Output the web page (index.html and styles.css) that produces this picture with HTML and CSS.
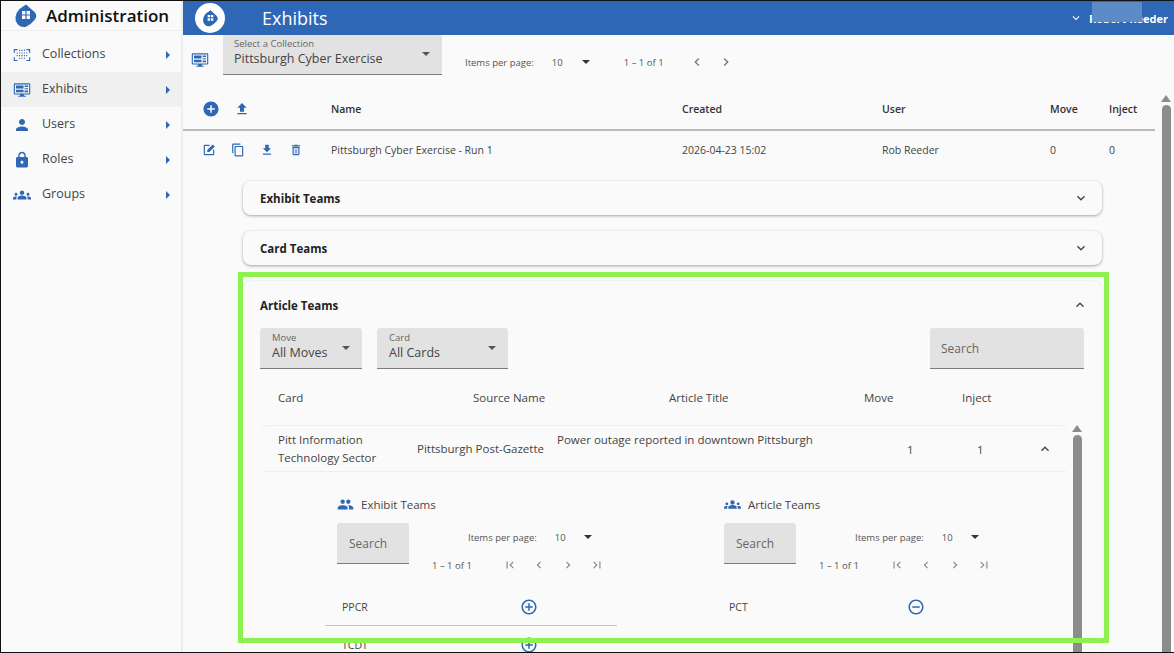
FILE: index.html
```html
<!DOCTYPE html>
<html lang="en">
<head>
    <meta charset="UTF-8">
    <meta name="viewport" content="width=device-width, initial-scale=1.0">
    <title>Exhibits</title>
    <link rel="stylesheet" href="styles.css">
</head>
<body>
    <svg class="defs" width="0" height="0">
        <symbol id="i-add" viewBox="0 0 24 24"><path d="M12 2C6.48 2 2 6.48 2 12s4.48 10 10 10 10-4.48 10-10S17.52 2 12 2zm5 11h-4v4h-2v-4H7v-2h4V7h2v4h4v2z"/></symbol>
        <symbol id="i-upload" viewBox="0 0 24 24"><path d="M9 16h6v-6h4l-7-7-7 7h4zm-4 2h14v2H5z"/></symbol>
        <symbol id="i-download" viewBox="0 0 24 24"><path d="M19 9h-4V3H9v6H5l7 7 7-7zM5 18v2h14v-2H5z"/></symbol>
        <symbol id="i-edit" viewBox="0 0 24 24"><path d="M3 5v14a2 2 0 0 0 2 2h14a2 2 0 0 0 2-2v-8h-2v8H5V5h8V3H5a2 2 0 0 0-2 2z"/><path d="M18.5 2.5L22 6 12.5 15.5H9V12z"/></symbol>
        <symbol id="i-copy" viewBox="0 0 24 24"><path d="M16 1H4c-1.1 0-2 .9-2 2v14h2V3h12V1zm3 4H8c-1.1 0-2 .9-2 2v14c0 1.1.9 2 2 2h11c1.1 0 2-.9 2-2V7c0-1.1-.9-2-2-2zm0 16H8V7h11v14z"/></symbol>
        <symbol id="i-trash" viewBox="0 0 24 24"><path d="M6 19c0 1.1.9 2 2 2h8c1.1 0 2-.9 2-2V7H6v12zM8 9h8v10H8V9zm7.5-5l-1-1h-5l-1 1H5v2h14V4z"/><path d="M10 10.500h1.200v7.500H10zM12.800 10.500H14v7.500h-1.200z"/></symbol>
        <symbol id="i-person" viewBox="0 0 24 24"><path d="M12 12c2.210 0 4-1.790 4-4s-1.790-4-4-4-4 1.790-4 4 1.790 4 4 4zm0 2c-2.670 0-8 1.340-8 4v2h16v-2c0-2.660-5.330-4-8-4z"/></symbol>
        <symbol id="i-lock" viewBox="0 0 24 24"><path d="M18 8h-1V6c0-2.760-2.240-5-5-5S7 3.240 7 6v2H6c-1.100 0-2 .9-2 2v10c0 1.100.9 2 2 2h12c1.100 0 2-.9 2-2V10c0-1.100-.9-2-2-2zm-6 9c-1.100 0-2-.9-2-2s.9-2 2-2 2 .9 2 2-.9 2-2 2zm3.100-9H8.900V6c0-1.710 1.390-3.100 3.100-3.100 1.710 0 3.100 1.390 3.100 3.100v2z"/></symbol>
        <symbol id="i-groups" viewBox="0 0 24 24"><path d="M12 12.750c1.630 0 3.070.39 4.240.9 1.080.48 1.760 1.560 1.760 2.730V18H6v-1.610c0-1.180.68-2.260 1.760-2.730 1.170-.52 2.610-.91 4.240-.91zM4 13c1.100 0 2-.9 2-2s-.9-2-2-2-2 .9-2 2 .9 2 2 2zm1.130 1.100c-.37-.06-.74-.1-1.130-.1-.99 0-1.930.21-2.780.58C.48 14.900 0 15.620 0 16.430V18h4.500v-1.610c0-.83.23-1.610.63-2.290zM20 13c1.100 0 2-.9 2-2s-.9-2-2-2-2 .9-2 2 .9 2 2 2zm4 3.430c0-.81-.48-1.530-1.220-1.850-.85-.37-1.790-.58-2.780-.58-.39 0-.76.04-1.130.1.4.68.63 1.460.63 2.290V18H24v-1.570zM12 6c1.660 0 3 1.340 3 3s-1.340 3-3 3-3-1.340-3-3 1.340-3 3-3z"/></symbol>
        <symbol id="i-people" viewBox="0 0 24 24"><path d="M16 11c1.660 0 2.990-1.340 2.990-3S17.660 5 16 5c-1.660 0-3 1.340-3 3s1.340 3 3 3zm-8 0c1.660 0 2.990-1.340 2.990-3S9.660 5 8 5C6.340 5 5 6.340 5 8s1.340 3 3 3zm0 2c-2.330 0-7 1.170-7 3.500V19h14v-2.500c0-2.330-4.670-3.500-7-3.500zm8 0c-.29 0-.62.02-.97.05 1.160.84 1.970 1.970 1.970 3.450V19h6v-2.500c0-2.330-4.670-3.500-7-3.500z"/></symbol>
        <symbol id="i-first" viewBox="0 0 24 24"><path d="M18.410 16.590L13.820 12l4.590-4.590L17 6l-6 6 6 6zM6 6h2v12H6z"/></symbol>
        <symbol id="i-prev" viewBox="0 0 24 24"><path d="M15.410 7.410L14 6l-6 6 6 6 1.410-1.410L10.830 12z"/></symbol>
        <symbol id="i-next" viewBox="0 0 24 24"><path d="M10 6L8.590 7.410 13.170 12l-4.580 4.590L10 18l6-6z"/></symbol>
        <symbol id="i-last" viewBox="0 0 24 24"><path d="M5.590 7.410L10.180 12l-4.590 4.590L7 18l6-6-6-6zM16 6h2v12h-2z"/></symbol>
        <symbol id="i-down" viewBox="0 0 24 24"><path d="M16.590 8.590L12 13.170 7.410 8.590 6 10l6 6 6-6z"/></symbol>
        <symbol id="i-up" viewBox="0 0 24 24"><path d="M12 8l-6 6 1.410 1.410L12 10.830l4.590 4.580L18 14z"/></symbol>
        <symbol id="i-plus-o" viewBox="0 0 24 24"><path d="M13 7h-2v4H7v2h4v4h2v-4h4v-2h-4V7zm-1-5C6.480 2 2 6.480 2 12s4.480 10 10 10 10-4.480 10-10S17.520 2 12 2zm0 18c-4.410 0-8-3.590-8-8s3.590-8 8-8 8 3.590 8 8-3.590 8-8 8z"/></symbol>
        <symbol id="i-minus-o" viewBox="0 0 24 24"><path d="M7 11v2h10v-2H7zm5-9C6.480 2 2 6.480 2 12s4.480 10 10 10 10-4.480 10-10S17.520 2 12 2zm0 18c-4.410 0-8-3.590-8-8s3.590-8 8-8 8 3.590 8 8-3.590 8-8 8z"/></symbol>
        <symbol id="i-monitor" viewBox="0 0 24 24"><path d="M2.500 3h19A1.500 1.500 0 0 1 23 4.500v12a1.500 1.500 0 0 1-1.500 1.500h-7v1.500H17V21H7v-1.500h2.500V18h-7A1.500 1.500 0 0 1 1 16.500v-12A1.500 1.500 0 0 1 2.500 3zm0 1.500v12h19v-12z"/><path d="M4 6h10v4H4zM15.500 6H20v2h-4.500zM15.500 9.500H20V11h-4.500zM4 11.500h10V15H4zM15.500 12.500H20V15h-4.500z"/></symbol>
        <symbol id="i-grid" viewBox="0 0 24 24"><path d="M1 4h5v1.500H2.500V9H1zM18 4h5v5h-1.500V5.500H18zM1 15h1.500v3.500H6V20H1zM21.500 15H23v5h-5v-1.500h3.500z"/><path d="M8 5h1.500v1.500H8zM11.200 5h1.500v1.500h-1.500zM14.500 5H16v1.500h-1.500zM5 8.500h1.500V10H5zM8 8.500h1.500V10H8zM11.200 8.500h1.500V10h-1.500zM14.500 8.500H16V10h-1.500zM17.500 8.500H19V10h-1.500zM5 12h1.500v1.500H5zM8 12h1.500v1.500H8zM11.200 12h1.500v1.500h-1.500zM14.500 12H16v1.500h-1.500zM17.500 12H19v1.500h-1.500zM8 15.500h1.500V17H8zM11.200 15.500h1.500V17h-1.500zM14.500 15.500H16V17h-1.500z"/></symbol>
        <symbol id="i-logo" viewBox="0 0 24 24"><path d="M12 .5l8.500 7.500q3.500 4 0 8q-4 5-9 7q-5.500.5-8-3q-2.500-3-2-7q1-5 4-8z"/><path fill="#fff" d="M8 7h3.400v3.400H8zM12.600 7H16v3.400h-3.400zM8 11.600h3.400V15H8zM12.600 11.600H16V15h-3.400z"/></symbol>
    </svg>

    <div class="app">
        <aside class="sidebar">
            <div class="brand">
                <svg class="brand-logo"><use href="#i-logo"/></svg>
                <span>Administration</span>
            </div>
            <nav class="nav">
                <a class="nav-item"><svg class="nav-icon"><use href="#i-grid"/></svg><span>Collections</span><i class="caret"></i></a>
                <a class="nav-item active"><svg class="nav-icon"><use href="#i-monitor"/></svg><span>Exhibits</span><i class="caret"></i></a>
                <a class="nav-item"><svg class="nav-icon"><use href="#i-person"/></svg><span>Users</span><i class="caret"></i></a>
                <a class="nav-item"><svg class="nav-icon"><use href="#i-lock"/></svg><span>Roles</span><i class="caret"></i></a>
                <a class="nav-item"><svg class="nav-icon"><use href="#i-groups"/></svg><span>Groups</span><i class="caret"></i></a>
            </nav>
        </aside>

        <div class="main">
            <header class="topbar">
                <div class="top-logo"><svg><use href="#i-logo"/></svg></div>
                <h1>Exhibits</h1>
                <div class="top-user">
                    <svg class="top-chev"><use href="#i-down"/></svg>
                    <b>R</b><b class="top-name">obert Reeder</b>
                    <div class="blur"></div>
                </div>
            </header>

            <div class="scroll-area">
                <div class="content">
                    <div class="toolbar">
                        <svg class="toolbar-icon"><use href="#i-monitor"/></svg>
                        <div class="select collection">
                            <label>Select a Collection</label>
                            <div class="value">Pittsburgh Cyber Exercise</div>
                            <i class="arrow"></i>
                        </div>
                        <div class="pager">
                            <span class="pager-label">Items per page:</span>
                            <span class="pager-size">10</span>
                            <i class="arrow dark"></i>
                            <span class="pager-range">1 – 1 of 1</span>
                            <svg class="pg pg-a"><use href="#i-prev"/></svg>
                            <svg class="pg pg-b"><use href="#i-next"/></svg>
                        </div>
                    </div>

                    <div class="ex-row ex-head">
                        <div class="ex-actions head-actions">
                            <svg class="ic-add"><use href="#i-add"/></svg>
                            <svg class="ic-up"><use href="#i-upload"/></svg>
                        </div>
                        <div>Name</div><div>Created</div><div>User</div><div>Move</div><div>Inject</div>
                    </div>
                    <div class="ex-row ex-body">
                        <div class="ex-actions">
                            <svg><use href="#i-edit"/></svg>
                            <svg><use href="#i-copy"/></svg>
                            <svg><use href="#i-download"/></svg>
                            <svg><use href="#i-trash"/></svg>
                        </div>
                        <div>Pittsburgh Cyber Exercise - Run 1</div><div>2026-04-23 15:02</div><div>Rob Reeder</div><div>0</div><div>0</div>
                    </div>

                    <section class="panel closed">
                        <h2>Exhibit Teams</h2>
                        <svg class="chev"><use href="#i-down"/></svg>
                    </section>
                    <section class="panel closed">
                        <h2>Card Teams</h2>
                        <svg class="chev"><use href="#i-down"/></svg>
                    </section>

                    <section class="panel open">
                        <div class="open-head">
                            <h2>Article Teams</h2>
                            <svg class="chev"><use href="#i-up"/></svg>
                        </div>
                        <div class="filters">
                            <div class="select move">
                                <label>Move</label>
                                <div class="value">All Moves</div>
                                <i class="arrow"></i>
                            </div>
                            <div class="select card">
                                <label>Card</label>
                                <div class="value">All Cards</div>
                                <i class="arrow"></i>
                            </div>
                            <div class="search wide">Search</div>
                        </div>

                        <div class="inner">
                            <div class="inner-main">
                                <div class="art-head">
                                    <div class="c1">Card</div><div class="c2">Source Name</div><div class="c3">Article Title</div><div class="c4">Move</div><div class="c5">Inject</div>
                                </div>
                                <div class="art-row">
                                    <div class="a1">Pitt Information<br>Technology Sector</div>
                                    <div class="a2">Pittsburgh Post-Gazette</div>
                                    <div class="a3">Power outage reported in downtown Pittsburgh</div>
                                    <div class="a4">1</div>
                                    <div class="a5">1</div>
                                    <svg class="a6"><use href="#i-up"/></svg>
                                </div>

                                <div class="team-cols">
                                    <div class="team-col">
                                        <div class="team-title"><svg><use href="#i-people"/></svg><span>Exhibit Teams</span></div>
                                        <div class="team-tools">
                                            <div class="search small">Search</div>
                                            <div class="team-pager">
                                                <div class="tp-top"><span class="tp-label">Items per page:</span><span class="tp-size">10</span><i class="arrow dark"></i></div>
                                                <div class="tp-bottom"><span class="tp-range">1 – 1 of 1</span>
                                                    <svg><use href="#i-first"/></svg><svg><use href="#i-prev"/></svg><svg><use href="#i-next"/></svg><svg><use href="#i-last"/></svg>
                                                </div>
                                            </div>
                                        </div>
                                        <div class="team-row line"><span>PPCR</span><svg><use href="#i-plus-o"/></svg></div>
                                        <div class="team-row"><span>TCDT</span><svg><use href="#i-plus-o"/></svg></div>
                                    </div>
                                    <div class="team-col">
                                        <div class="team-title"><svg><use href="#i-groups"/></svg><span>Article Teams</span></div>
                                        <div class="team-tools">
                                            <div class="search small">Search</div>
                                            <div class="team-pager">
                                                <div class="tp-top"><span class="tp-label">Items per page:</span><span class="tp-size">10</span><i class="arrow dark"></i></div>
                                                <div class="tp-bottom"><span class="tp-range">1 – 1 of 1</span>
                                                    <svg><use href="#i-first"/></svg><svg><use href="#i-prev"/></svg><svg><use href="#i-next"/></svg><svg><use href="#i-last"/></svg>
                                                </div>
                                            </div>
                                        </div>
                                        <div class="team-row"><span>PCT</span><svg><use href="#i-minus-o"/></svg></div>
                                    </div>
                                </div>
                            </div>
                            <div class="scrollbar inner-bar"><i class="sb-up"></i><i class="sb-thumb"></i></div>
                        </div>
                    </section>
                </div>
                <div class="scrollbar page-bar"><i class="sb-up"></i><i class="sb-thumb"></i></div>
            </div>
        </div>
    </div>

    <div class="highlight"></div>
</body>
</html>
```

FILE: styles.css
```css
*{
    margin: 0;
    padding: 0;
    box-sizing: border-box;
}
html,body{
    width: 1174px;
    height: 653px;
    overflow: hidden;
}
body{
    position: relative;
    font-family: "Open Sans", "Liberation Sans", sans-serif;
    color: #333;
    background: #fafafa;
    border: 1px solid #111;
    border-right: 0;
}
.defs{
    position: absolute;
}
svg{
    display: block;
    fill: #2d67b5;
    flex: none;
}
.app{
    display: flex;
    height: 100%;
}

/* left menu */
.sidebar{
    width: 182px;
    flex: none;
    background: #fafafa;
    border-right: 2px solid #eee;
}
.brand{
    height: 29px;
    display: flex;
    align-items: center;
    padding-left: 13px;
    border-bottom: 1px solid #eee;
    font-size: 17px;
    font-weight: 600;
    color: #111;
    box-sizing: content-box;
}
.brand-logo{
    width: 24px;
    height: 24px;
    margin-right: 8px;
}
.nav{
    padding-top: 6px;
}
.nav-item{
    display: flex;
    align-items: center;
    height: 35px;
    padding-left: 12px;
    font-size: 12.500px;
    color: #444;
}
.nav-item.active{
    background: #f0f0f0;
}
.nav-item span{
    flex: 1;
    padding-bottom: 2px;
}
.nav-icon{
    width: 18px;
    height: 18px;
    margin-right: 11px;
}
.caret{
    width: 0;
    height: 0;
    margin-right: 11px;
    border-left: 4px solid #2d67b5;
    border-top: 4px solid transparent;
    border-bottom: 4px solid transparent;
}

/* top bar */
.main{
    flex: 1;
    min-width: 0;
    display: flex;
    flex-direction: column;
}
.topbar{
    height: 34px;
    flex: none;
    display: flex;
    align-items: center;
    padding-left: 12px;
    background: #2d67b5;
    color: #fff;
    position: relative;
}
.top-logo{
    width: 30px;
    height: 30px;
    border-radius: 50%;
    background: #fff;
    display: flex;
    align-items: center;
    justify-content: center;
}
.top-logo svg{
    width: 17px;
    height: 17px;
}
.topbar h1{
    font-size: 18px;
    font-weight: 400;
    margin-left: 37px;
    flex: 1;
}
.top-user{
    display: flex;
    align-items: center;
    width: 105px;
    font-size: 11px;
    position: relative;
}
.top-chev{
    width: 14px;
    height: 14px;
    fill: #fff;
    margin-right: 6px;
}
.top-name{
    white-space: nowrap;
}
.blur{
    position: absolute;
    left: 23px;
    top: -9px;
    width: 50px;
    height: 20px;
    background: #5c8bc8;
}

/* page body */
.scroll-area{
    flex: 1;
    min-height: 0;
    display: flex;
    overflow: hidden;
}
.content{
    flex: 1;
    min-width: 0;
}
.scrollbar{
    flex: none;
    display: flex;
    flex-direction: column;
    align-items: center;
}
.page-bar{
    width: 16px;
    padding-top: 60px;
}
.sb-up{
    width: 0;
    height: 0;
    border-left: 5px solid transparent;
    border-right: 5px solid transparent;
    border-bottom: 7px solid #8c8c8c;
    margin-bottom: 3px;
}
.sb-thumb{
    width: 9px;
    flex: 1;
    background: #8c8c8c;
    border-radius: 5px 5px 0 0;
}

.toolbar{
    display: flex;
    height: 53px;
    padding-left: 8px;
}
.toolbar-icon{
    width: 18px;
    height: 18px;
    margin: 16px 14px 0 0;
}
.select{
    position: relative;
    background: #e2e2e2;
    border-bottom: 1px solid #7b7b7b;
    border-radius: 3px 3px 0 0;
}
.select label{
    display: block;
    font-size: 9.500px;
    color: #666;
    line-height: 12px;
}
.select .value{
    font-size: 12.500px;
    color: #444;
    line-height: 17px;
}
.collection{
    width: 219px;
    height: 40px;
    padding: 3px 0 0 11px;
}
.arrow{
    display: block;
    width: 0;
    height: 0;
    border-left: 4px solid transparent;
    border-right: 4px solid transparent;
    border-top: 4px solid #555;
}
.arrow.dark{
    border-top-color: #333;
}
.select .arrow{
    position: absolute;
    right: 12px;
    top: 17px;
}
.pager{
    display: flex;
    align-items: center;
    height: 54px;
    font-size: 9.500px;
    color: #555;
    padding-left: 23px;
}
.pager-size{
    margin-left: 18px;
    width: 30px;
}
.pager-range{
    margin-left: 34px;
    width: 65px;
}
.pg{
    width: 16px;
    height: 16px;
    fill: #777;
}
.pg-b{
    margin-left: 13px;
}

.ex-row{
    display: grid;
    grid-template-columns: 148px 351px 200px 168px 59px 48px;
    align-items: center;
    font-size: 10.500px;
    color: #444;
    padding-right: 4px;
}
.ex-head{
    height: 43px;
    font-weight: 600;
    color: #333;
    border-bottom: 2px solid #bbb;
    margin-right: 3px;
    padding-right: 0;
}
.ex-body{
    height: 38px;
}
.ex-actions{
    display: flex;
    padding-left: 19px;
    gap: 15px;
}
.ex-actions svg{
    width: 14px;
    height: 14px;
}
.head-actions{
    gap: 14px;
    align-items: center;
}
.ic-add{
    width: 18px !important;
    height: 18px !important;
}
.ic-up{
    width: 16px !important;
    height: 16px !important;
}

/* expansion panels */
.panel{
    width: 859px;
    margin-left: 60px;
    background: #fafafa;
    border-radius: 8px;
    box-shadow: 0 1px 3px rgba(0,0,0,0.35);
}
.panel h2{
    font-size: 11.500px;
    font-weight: 700;
    color: #222;
}
.closed{
    height: 34px;
    display: flex;
    align-items: center;
    justify-content: space-between;
    padding: 0 13px 0 17px;
    margin-bottom: 16px;
}
.closed:first-of-type{
    margin-top: 12px;
}
.chev{
    width: 16px;
    height: 16px;
    fill: #444;
}
.open{
    margin-top: 15px;
    height: 400px;
    padding: 0 18px 0 17px;
    box-shadow: 0 0 2px rgba(0,0,0,0.12);
}
.open-head{
    height: 47px;
    display: flex;
    align-items: center;
    justify-content: space-between;
    padding-right: 0;
    padding-top: 1px;
}
.open-head .chev{
    margin-right: -4px;
}
.filters{
    display: flex;
    gap: 15px;
    height: 41px;
}
.filters .select{
    padding: 4px 0 0 12px;
    border-radius: 3px 3px 0 0;
}
.move{
    width: 102px;
}
.card{
    width: 131px;
}
.filters .select .arrow{
    top: 18px;
}
.search{
    background: #e2e2e2;
    border-bottom: 1px solid #7b7b7b;
    border-radius: 3px 3px 0 0;
    font-size: 12px;
    color: #666;
    display: flex;
    align-items: center;
    padding-left: 12px;
}
.wide{
    width: 154px;
    margin-left: auto;
    padding-left: 11px;
}

/* nested article table */
.inner{
    display: flex;
    height: 300px;
}
.inner-main{
    width: 812px;
    flex: none;
}
.inner-bar{
    width: 10px;
    padding-top: 18px;
    margin-top: 46px;
    margin-left: 0;
}
.inner-bar{
    padding-top: 10px;
}
.art-head{
    display: grid;
    grid-template-columns: 195px 196px 195px 98px 60px;
    height: 56px;
    padding: 0 0 0 18px;
    align-items: center;
    font-size: 11.500px;
    color: #444;
}
.art-row{
    position: relative;
    display: flex;
    height: 47px;
    width: 809px;
    font-size: 11.500px;
    color: #444;
    line-height: 17.500px;
    border-top: 1px solid #eee;
    border-bottom: 1px solid #eee;
    border-radius: 8px;
}
.a1{
    margin-left: 18px;
    width: 139px;
    padding-top: 5px;
}
.a2{
    width: 140px;
    padding-top: 14px;
    white-space: nowrap;
}
.a3{
    width: 350px;
    padding-top: 5px;
    white-space: nowrap;
}
.a4{
    width: 70px;
    padding-top: 15px;
}
.a5{
    width: 60px;
    padding-top: 15px;
}
.a6{
    width: 16px;
    height: 16px;
    fill: #444;
    margin-top: 15px;
}

.team-cols{
    display: flex;
    padding-left: 65px;
}
.team-col{
    width: 387px;
    flex: none;
}
.team-title{
    display: flex;
    align-items: center;
    height: 20px;
    margin-top: 22px;
    margin-left: 12px;
    font-size: 11.500px;
    color: #444;
}
.team-title svg{
    width: 17px;
    height: 17px;
    margin-right: 7px;
}
.team-tools{
    display: flex;
    margin-top: 9px;
    margin-left: 12px;
}
.small{
    width: 72px;
    height: 41px;
}
.team-pager{
    font-size: 9.500px;
    color: #555;
}
.tp-top{
    display: flex;
    align-items: center;
    height: 28px;
    margin-top: 0;
    padding-left: 59px;
}
.tp-size{
    margin-left: 18px;
    width: 29px;
}
.tp-bottom{
    display: flex;
    align-items: center;
    height: 28px;
    padding-left: 23px;
}
.tp-range{
    width: 71px;
}
.tp-bottom svg{
    width: 14px;
    height: 14px;
    fill: #888;
    margin-right: 15px;
}
.team-row{
    display: flex;
    align-items: center;
    height: 38px;
    width: 292px;
    padding-left: 17px;
    font-size: 10.500px;
    color: #444;
    margin-top: 0;
}
.team-row span{
    width: 178px;
}
.team-row svg{
    width: 18px;
    height: 18px;
}
.team-tools + .team-row{
    margin-top: 9px;
}
.line{
    border-bottom: 1px solid #c4c4c4;
}

/* green annotation box drawn over the screenshot */
.highlight{
    position: absolute;
    left: 237px;
    top: 271px;
    width: 871px;
    height: 371px;
    border: 5px solid #8cf24f;
    pointer-events: none;
}
```
